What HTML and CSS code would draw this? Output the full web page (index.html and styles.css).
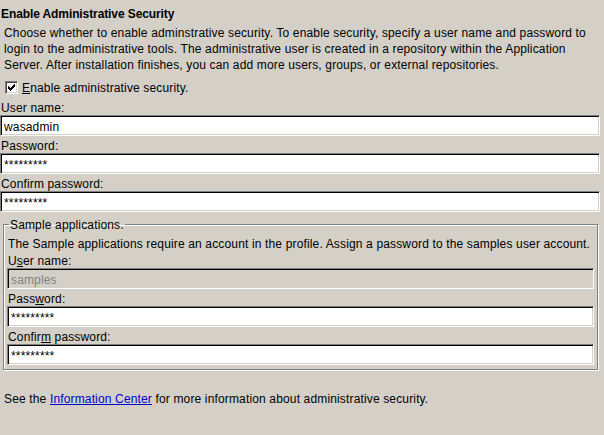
FILE: index.html
```html
<!DOCTYPE html>
<html>
<head>
<meta charset="utf-8">
<link rel="stylesheet" href="styles.css">
</head>
<body>
<div class="page">
  <h1 class="title">Enable Administrative Security</h1>
  <p class="desc">Choose whether to enable adminstrative security. To enable security, specify a user name and password to login to the administrative tools. The administrative user is created in a repository within the Application Server. After installation finishes, you can add more users, groups, or external repositories.</p>
  <div class="check">
    <span class="box">
      <svg width="9" height="9" viewBox="0 0 9 9" shape-rendering="crispEdges">
        <g fill="#000">
          <rect x="1" y="3" width="1" height="3"/>
          <rect x="2" y="4" width="1" height="3"/>
          <rect x="3" y="5" width="1" height="3"/>
          <rect x="4" y="4" width="1" height="3"/>
          <rect x="5" y="3" width="1" height="3"/>
          <rect x="6" y="2" width="1" height="3"/>
          <rect x="7" y="1" width="1" height="3"/>
        </g>
      </svg>
    </span>
    <span class="check-label"><u>E</u>nable administrative security.</span>
  </div>
  <div class="field">
    <div class="label">User name:</div>
    <div class="textbox">wasadmin</div>
  </div>
  <div class="field">
    <div class="label">Password:</div>
    <div class="textbox">*********</div>
  </div>
  <div class="field">
    <div class="label">Confirm password:</div>
    <div class="textbox">*********</div>
  </div>
  <fieldset class="group">
    <legend class="legend">Sample applications.</legend>
    <p class="group-desc">The Sample applications require an account in the profile. Assign a password to the samples user account.</p>
    <div class="field">
      <div class="label">U<u>s</u>er name:</div>
      <div class="textbox disabled">samples</div>
    </div>
    <div class="field">
      <div class="label">Pass<u>w</u>ord:</div>
      <div class="textbox">*********</div>
    </div>
    <div class="field">
      <div class="label">Confir<u>m</u> password:</div>
      <div class="textbox">*********</div>
    </div>
  </fieldset>
  <p class="footer">See the <a class="link" href="#">Information Center</a> for more information about administrative security.</p>
</div>
</body>
</html>
```
FILE: styles.css
```css
html, body {
  margin: 0;
  padding: 0;
  background: #d4d0c8;
}
body {
  width: 604px;
  height: 435px;
  overflow: hidden;
  font-family: "Liberation Sans", Arial, sans-serif;
  font-size: 12px;
  letter-spacing: 0.15px;
  color: #000;
}
.page {
  padding-top: 6px;
}
.title {
  margin: 0;
  padding-left: 1px;
  font-size: 12px;
  font-weight: bold;
  letter-spacing: -0.1px;
  line-height: 16px;
}
.desc {
  margin: 3px 0 0 0;
  padding-left: 4px;
  padding-right: 8px;
  line-height: 16px;
}
.check {
  display: flex;
  align-items: center;
  height: 19px;
  margin-top: 5px;
  margin-bottom: 1px;
  padding-left: 5px;
}
.box {
  display: flex;
  align-items: center;
  justify-content: center;
  box-sizing: border-box;
  width: 13px;
  height: 13px;
  background: #fff;
  border: 1px solid;
  border-color: #808080 #fff #fff #808080;
  box-shadow: inset 1px 1px 0 #404040, inset -1px -1px 0 #d4d0c8;
}
.box svg {
  display: block;
}
.check-label {
  margin-left: 4px;
  line-height: 16px;
}
.label {
  box-sizing: border-box;
  padding: 3px 0 0 1px;
  line-height: 14px;
  height: 17px;
}
.textbox {
  box-sizing: border-box;
  width: 600px;
  height: 21px;
  padding: 3px 0 0 3px;
  line-height: 16px;
  background: #fff;
  border: 1px solid;
  border-color: #808080 #fff #fff #808080;
  box-shadow: inset 1px 1px 0 #000, inset -1px -1px 0 #d4d0c8;
  white-space: nowrap;
  overflow: hidden;
}
.textbox.disabled {
  background: #d4d0c8;
  color: #808080;
}
.group {
  margin: 4px 6px 0 3px;
  padding: 0 3px 4px 3px;
  border: 1px solid #808080;
  box-shadow: inset 1px 1px 0 #fff, 1px 1px 0 #fff;
  min-width: 0;
}
.legend {
  margin-left: 2px;
  padding: 2px 1px 0 1px;
  line-height: 14px;
}
.group-desc {
  margin: 6px 0 0 1px;
  line-height: 13px;
}
.group .textbox {
  width: 587px;
}
.footer {
  margin: 21px 0 0 0;
  padding-left: 4px;
  line-height: 16px;
}
.link {
  color: #0000cc;
  text-decoration: underline;
}
```
